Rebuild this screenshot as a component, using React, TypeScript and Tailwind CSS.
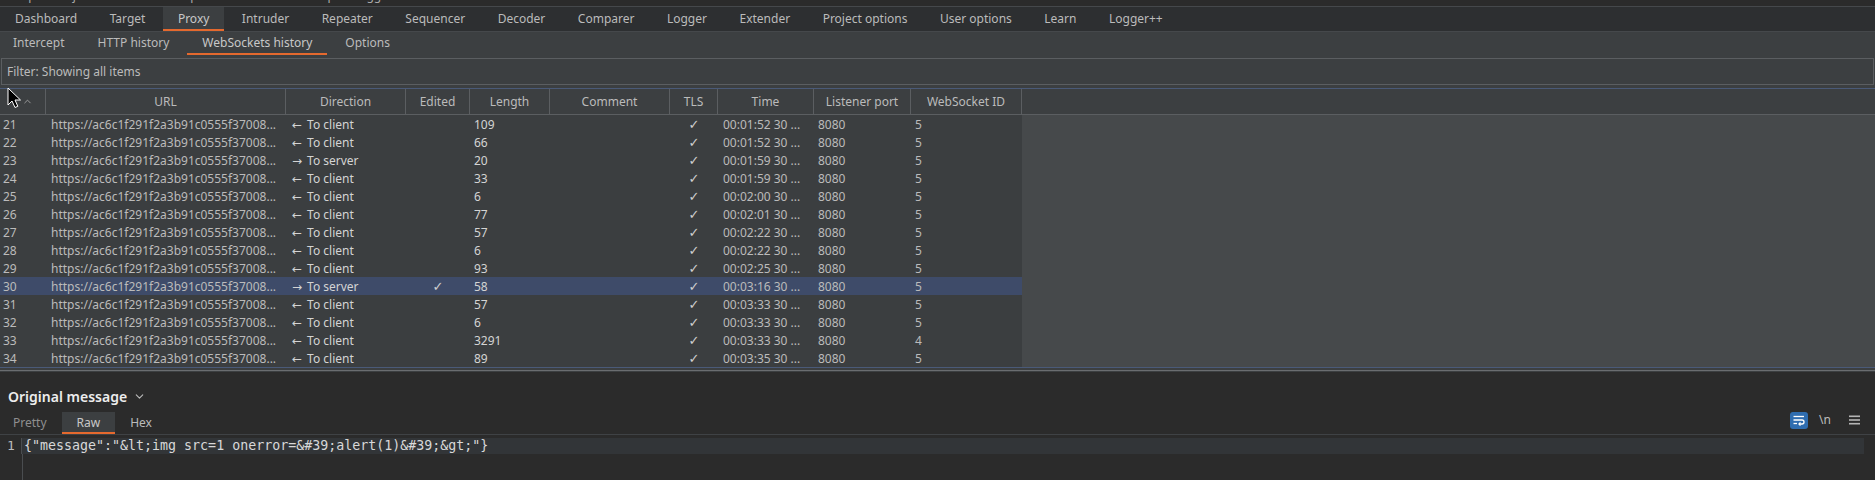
import { ChevronDown, ChevronUp } from "lucide-react";

const mainTabs = [
  "Dashboard",
  "Target",
  "Proxy",
  "Intruder",
  "Repeater",
  "Sequencer",
  "Decoder",
  "Comparer",
  "Logger",
  "Extender",
  "Project options",
  "User options",
  "Learn",
  "Logger++",
];

const subTabs = ["Intercept", "HTTP history", "WebSockets history", "Options"];

const menuItems = ["Burp", "Project", "Intruder", "Repeater", "Window", "Help", "Logger++"];

type Row = {
  id: number;
  toServer: boolean;
  edited?: boolean;
  length: string;
  time: string;
  wsId: string;
};

const rows: Row[] = [
  { id: 21, toServer: false, length: "109", time: "00:01:52", wsId: "5" },
  { id: 22, toServer: false, length: "66", time: "00:01:52", wsId: "5" },
  { id: 23, toServer: true, length: "20", time: "00:01:59", wsId: "5" },
  { id: 24, toServer: false, length: "33", time: "00:01:59", wsId: "5" },
  { id: 25, toServer: false, length: "6", time: "00:02:00", wsId: "5" },
  { id: 26, toServer: false, length: "77", time: "00:02:01", wsId: "5" },
  { id: 27, toServer: false, length: "57", time: "00:02:22", wsId: "5" },
  { id: 28, toServer: false, length: "6", time: "00:02:22", wsId: "5" },
  { id: 29, toServer: false, length: "93", time: "00:02:25", wsId: "5" },
  { id: 30, toServer: true, edited: true, length: "58", time: "00:03:16", wsId: "5" },
  { id: 31, toServer: false, length: "57", time: "00:03:33", wsId: "5" },
  { id: 32, toServer: false, length: "6", time: "00:03:33", wsId: "5" },
  { id: 33, toServer: false, length: "3291", time: "00:03:33", wsId: "4" },
  { id: 34, toServer: false, length: "89", time: "00:03:35", wsId: "5" },
];

const cols = "grid-cols-[46px_240px_120px_64px_80px_120px_48px_96px_97px_111px]";

const headers = ["URL", "Direction", "Edited", "Length", "Comment", "TLS", "Time", "Listener port", "WebSocket ID"];

function Cursor() {
  return (
    <svg className="pointer-events-none absolute left-[7px] top-[87px]" width="15" height="22" viewBox="0 0 15 22">
      <path d="M1 1 L1 18 L5 14 L8 20.5 L10.8 19.3 L8 13 L13.5 13 Z" fill="#000" stroke="#fff" strokeWidth="1" strokeLinejoin="round" />
    </svg>
  );
}

function WrapIcon() {
  return (
    <div className="flex h-[17px] w-[18px] items-center justify-center rounded-[3px] bg-[#2f6db0]">
      <svg width="12" height="11" viewBox="0 0 12 11" fill="none" stroke="#fff" strokeWidth="1.3">
        <path d="M0.5 1.5 H11" />
        <path d="M0.5 5 H9 a2 2 0 0 1 0 4 H6" />
        <path d="M7.5 7.5 L6 9 L7.5 10.5" />
        <path d="M0.5 8.5 H4" />
      </svg>
    </div>
  );
}

function MenuIcon() {
  return (
    <svg width="11" height="10" viewBox="0 0 11 10" fill="#b5b5b5">
      <rect x="0" y="0.5" width="11" height="1.6" />
      <rect x="0" y="4.2" width="11" height="1.6" />
      <rect x="0" y="7.9" width="11" height="1.6" />
    </svg>
  );
}

const check = "font-['DejaVu_Sans',sans-serif] text-[13px] text-center text-[#cfcfcf]";

export default function App() {
  return (
    <div className="relative flex h-[480px] w-[1875px] flex-col overflow-hidden bg-[#2b2b2b] font-['Noto_Sans',sans-serif] text-[12px] text-[#bbbbbb]">
      {/* menu bar, mostly scrolled off */}
      <div className="h-[6px] overflow-hidden">
        <div className="-mt-[12px] flex gap-[18px] pl-[8px] text-[12px] leading-[16px] text-[#a9a9a9]">
          {menuItems.map((m) => (
            <span key={m}>{m}</span>
          ))}
        </div>
      </div>

      {/* main tabs */}
      <div className="flex h-[25px] gap-[2.5px] border-t border-[#45484b] bg-[#2d2f31]">
        {mainTabs.map((t) => (
          <div
            key={t}
            className={
              t === "Proxy"
                ? "flex items-center border-b-2 border-[#e5692e] bg-[#3c3f41] px-[15px] pt-[2px] text-[#c8c8c8]"
                : "flex items-center border-b-2 border-transparent px-[15px] pt-[2px] text-[#bbbbbb]"
            }
          >
            {t}
          </div>
        ))}
      </div>

      {/* sub tabs */}
      <div className="flex h-[24px] gap-[3px] border-t border-[#45484b] bg-[#3c3f41]">
        {subTabs.map((t, i) => (
          <div
            key={t}
            className={
              (i === 0 ? "-ml-[2px] " : "") +
              (t === "WebSockets history"
                ? "flex items-center border-b-2 border-[#e5692e] px-[15px] pt-[1px] text-[#c8c8c8]"
                : "flex items-center border-b-2 border-transparent px-[15px] pt-[1px]")
            }
          >
            {t}
          </div>
        ))}
      </div>

      <div className="flex flex-1 flex-col bg-[#3c3f41]">
        {/* filter */}
        <div className="mx-[1px] mt-[3px] flex h-[27px] items-center border border-[#5b5e61] bg-[#3c3f41] px-[5px]">
          Filter: Showing all items
        </div>

        {/* table */}
        <div className="mt-[3px] flex flex-col border-t border-[#4a5a78]">
          <div className="flex h-[26px] border-b border-[#5b5e61] bg-[#3c3f41]">
            <div className={`grid ${cols}`}>
              <div className="flex items-center justify-end border-r border-[#5b5e61] pr-[12px]">
                <ChevronUp size={11} strokeWidth={1.6} />
              </div>
              {headers.map((h) => (
                <div key={h} className="flex items-center justify-center border-r border-[#5b5e61]">
                  {h}
                </div>
              ))}
            </div>
          </div>
          <div className="flex h-[252px]">
            <div className="flex w-[1022px] flex-col bg-[#3b3e40]">
              {rows.map((r) => (
                <div
                  key={r.id}
                  className={`grid h-[18px] items-center ${cols} ${r.id === 30 ? "bg-[#3e4b69]" : ""}`}
                >
                  <div className="pl-[3px]">{r.id}</div>
                  <div className="whitespace-nowrap pl-[5px]">https://ac6c1f291f2a3b91c0555f37008...</div>
                  <div className="flex items-center whitespace-nowrap pl-[6px] text-[#d4d4d4]">
                    <span className="font-['DejaVu_Sans',sans-serif] text-[12px] leading-none">
                      {r.toServer ? "→" : "←"}
                    </span>
                    <span className="ml-[5px]">{r.toServer ? "To server" : "To client"}</span>
                  </div>
                  <div className={check}>{r.edited ? "✓" : ""}</div>
                  <div className="pl-[4px] text-[#d4d4d4]">{r.length}</div>
                  <div />
                  <div className={check}>✓</div>
                  <div className="whitespace-nowrap pl-[5px]">{r.time} 30 ...</div>
                  <div className="pl-[4px]">8080</div>
                  <div className="pl-[4px]">{r.wsId}</div>
                </div>
              ))}
            </div>
            <div className="flex-1 bg-[#46494b]" />
          </div>
          <div className="h-[1px] bg-[#4a5a78]" />
        </div>
        <div className="h-[2px] bg-[#3c3f41]" />
        <div className="h-[1px] bg-[#6a6d70]" />
        <div className="h-[1px] bg-[#3c3f41]" />

        {/* message editor */}
        <div className="flex flex-1 flex-col bg-[#2b2b2b]">
          <div className="mt-[14px] flex items-center gap-[6px] pl-[8px]">
            <span className="text-[14px] font-semibold text-[#ededed]">Original message</span>
            <ChevronDown size={13} className="text-[#bbbbbb]" />
          </div>
          <div className="mt-[5px] flex h-[23px] items-end justify-between border-b border-[#3f4245]">
            <div className="flex h-full">
              <div className="flex items-center pl-[13px] pr-[15px] text-[#8f8f8f]">Pretty</div>
              <div className="flex items-center border-b-2 border-[#e5692e] bg-[#3c3f41] px-[15px] pt-[2px] text-[#c8c8c8]">Raw</div>
              <div className="flex items-center px-[15px]">Hex</div>
            </div>
            <div className="mb-[5px] flex items-center pr-[15px]">
              <WrapIcon />
              <span className="ml-[11px] text-[12px]">\n</span>
              <span className="ml-[18px]">
                <MenuIcon />
              </span>
            </div>
          </div>
          <div className="mt-[3px] flex h-[16px]">
            <div className="w-[22px] border-r border-[#4a4d50] pl-[7px] font-['DejaVu_Sans_Mono',monospace] text-[13px] leading-[16px] text-[#bbbbbb]">
              1
            </div>
            <div className="w-[1842px] bg-[#323538] pl-[2px] font-['DejaVu_Sans_Mono',monospace] text-[13.3px] leading-[16px] text-[#d8d8d8]">
              {'{"message":"&lt;img src=1 onerror=&#39;alert(1)&#39;&gt;"}'}
            </div>
          </div>
          <div className="ml-[22px] flex-1 border-l border-[#4a4d50]" />
        </div>
      </div>
      <Cursor />
    </div>
  );
}
